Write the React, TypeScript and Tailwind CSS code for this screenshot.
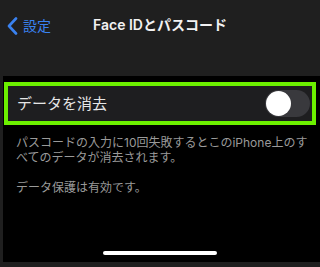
const font = {
  fontFamily: "Inter, 'Noto Sans CJK JP', sans-serif",
};

function BackChevron() {
  return (
    <svg width="11" height="18" viewBox="0 0 11 18" className="shrink-0">
      <path
        d="M9 1.5 L2 9 L9 16.5"
        fill="none"
        stroke="#3a82f0"
        strokeWidth="2.6"
        strokeLinecap="round"
        strokeLinejoin="round"
      />
    </svg>
  );
}

function Toggle() {
  return (
    <div className="flex h-[27px] w-[45px] items-center rounded-full bg-[#39393d] pl-[1px]">
      <div className="h-[25px] w-[25px] rounded-full bg-white" />
    </div>
  );
}

export default function App() {
  return (
    <div className="flex h-[267px] w-[320px] flex-col bg-[#1f1f1f]" style={font}>
      {/* nav bar */}
      <div className="relative flex h-[76px] items-start pt-[17px]">
        <div className="flex items-center gap-[5px] pl-[7px]">
          <BackChevron />
          <span className="text-[14px] leading-[16px] text-[#3a82f0]">設定</span>
        </div>
        <div className="absolute left-0 right-0 top-[17px] text-center text-[14px] font-semibold leading-[16px] text-[#f2f2f2]">
          Face IDとパスコード
        </div>
      </div>

      {/* content */}
      <div className="ml-[3px] flex h-[186px] flex-col bg-black pt-[6px]">
        <div className="ml-[1px] flex h-[43px] w-[312px] items-center justify-between border-4 border-[#6cf000] bg-[#1e1e20] pl-[9px] pr-[2px]">
          <span className="text-[15px] leading-[18px] text-[#e6e6e6]">データを消去</span>
          <Toggle />
        </div>
        <div className="mt-[10px] pl-[13px] pr-[10px] text-[12px] leading-[15px] text-[#9a9a9a]">
          <p>パスコードの入力に10回失敗するとこのiPhone上のすべてのデータが消去されます。</p>
          <p className="mt-[15px]">データ保護は有効です。</p>
        </div>
        <div className="mt-auto mb-[7px] flex justify-center pr-[3px]">
          <div className="h-[4px] w-[114px] rounded-full bg-white" />
        </div>
      </div>
    </div>
  );
}
